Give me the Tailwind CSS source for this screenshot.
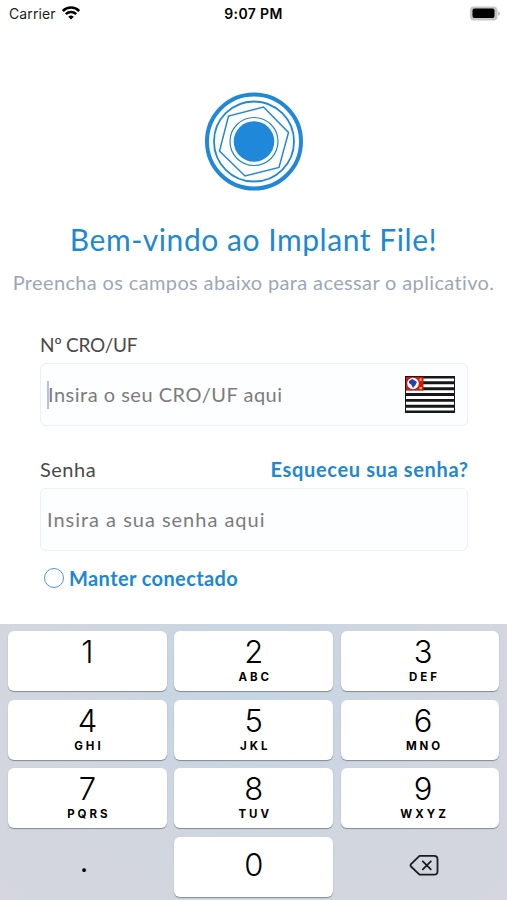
<!DOCTYPE html>
<html lang="pt-BR">
<head>
    <meta charset="UTF-8">
    <meta name="viewport" content="width=device-width, initial-scale=1">
    <title>Implant File</title>
    <script src="https://cdn.jsdelivr.net/npm/@tailwindcss/browser@4"></script>
</head>
<body class="bg-white h-[900px] flex flex-col overflow-hidden font-['Lato',sans-serif] whitespace-nowrap">

<!-- status bar -->
<header class="h-7 shrink-0 grid grid-cols-3 items-center pl-[9px] pr-[7px] pb-[2px] font-['Inter',sans-serif] text-[14px] text-[#222]">
    <div class="flex items-center gap-[6px]">
        <span class="tracking-[0.1px]">Carrier</span>
        <svg class="w-[18px] h-[14px]" viewBox="0 0 18 14" fill="none" stroke="#000" stroke-width="2.5">
            <path d="M0.8 5a11.6 11.6 0 0 1 16.4 0"/>
            <path d="M3.8 8.2a7.4 7.4 0 0 1 10.4 0"/>
            <path d="M9 13.6L6.2 10.8a4 4 0 0 1 5.6 0z" fill="#000" stroke="none"/>
        </svg>
    </div>
    <span class="text-center font-semibold text-black tracking-[0.35px] pr-[2px]">9:07 PM</span>
    <svg class="justify-self-end w-[31px] h-[15px]" viewBox="0 0 31 15">
        <rect x="1" y="0.5" width="27.5" height="14" rx="4" fill="#c4c4c4"/>
        <rect x="3.5" y="2.5" width="22" height="9.5" rx="2" fill="#000"/>
        <path d="M29.3 5.2c2 1 2 3.6 0 4.6z" fill="#aaa"/>
    </svg>
</header>

<main class="h-[596px] shrink-0 flex flex-col">
    <svg class="mt-[64px] self-center w-[100px] h-[100px]" viewBox="0 0 100 100" fill="none" stroke="#2088d8">
        <circle cx="50" cy="49.5" r="47" stroke-width="4"/>
        <circle cx="50" cy="49.5" r="40" stroke-width="1.8"/>
        <path d="M59.5 15L84.5 40.5L75 75.5L41 84L15.5 59L24.5 24Z" stroke-width="1.5"/>
        <circle cx="50" cy="49.5" r="24" stroke-width="1.2"/>
        <circle cx="50" cy="49.5" r="20.3" fill="#2088d8" stroke="none"/>
    </svg>

    <h1 class="mt-[27px] h-10 leading-10 text-center text-[30px] text-[#2088d3] tracking-[0.55px]">Bem-vindo ao Implant File!</h1>
    <p class="mt-[9px] h-7 leading-7 text-center text-[20px] text-[#9da7b7] tracking-[0.36px]">Preencha os campos abaixo para acessar o aplicativo.</p>

    <form class="mt-[33px] mx-10 flex flex-col text-[20px]">
        <label class="h-[30px] leading-[31px] text-[19px] text-[#4a4a4a] tracking-[-0.3px]">Nº CRO/UF</label>
        <div class="mt-1 h-[63px] w-[428px] rounded-md border-[1.5px] border-[#eceff1] bg-[#fcfeff] flex items-center justify-between pl-[6px] pr-3">
            <div class="flex items-center text-[#7c7c7c] tracking-[0.5px]">
                <span class="w-[2px] h-7 -mr-px bg-[#b5bff0]"></span>
                <span class="-mt-[2px]">Insira o seu CRO/UF aqui</span>
            </div>
            <!-- São Paulo flag -->
            <svg class="w-[50px] h-[37px]" viewBox="0 0 50 37">
                <rect width="50" height="37" fill="#171717"/>
                <path d="M1 3.9H49M1 9.7H49M1 15.6H49M1 21.5H49M1 27.3H49M1 33.1H49" stroke="#fff" stroke-width="2.9"/>
                <rect x="1" y="1" width="17.5" height="13.5" fill="#cf1717"/>
                <circle cx="8" cy="7.5" r="5.8" fill="#fff"/>
                <path d="M4 5l3-2 2 1 3 2-1.5 3-2.5 3-1.5-3-2.5-2z" fill="#2643a5"/>
                <path d="M14.5 2.5h2.2v2.2h-2.2zM14.5 11h2.2v2.2h-2.2z" fill="#f4cc22"/>
            </svg>
        </div>

        <div class="mt-7 h-[30px] w-[428px] leading-[30px] flex justify-between">
            <label class="text-[#4a4a4a] tracking-[0.5px]">Senha</label>
            <a class="font-bold text-[#2088d3] tracking-[0.65px] -mr-[0.65px]">Esqueceu sua senha?</a>
        </div>
        <div class="mt-1 h-[63px] w-[428px] rounded-md border-[1.5px] border-[#eceff1] bg-[#fcfeff] flex items-center pl-[6px] text-[#7c7c7c] tracking-[0.98px]">
            <span class="-mt-[2px]">Insira a sua senha aqui</span>
        </div>

        <label class="mt-3 ml-1 h-[30px] flex items-center gap-[5px] font-bold text-[#2088d3] tracking-[0.4px]">
            <span class="size-5 rounded-full border-[1.5px] border-[#4b97d8]"></span>
            <span>Manter conectado</span>
        </label>
    </form>
</main>

<!-- numeric keyboard -->
<section class="h-[276px] shrink-0 bg-[radial-gradient(ellipse_at_50%_25%,#c5d5e6_0%,#d2d6de_60%,#d5d6df_100%)] pl-2 pr-[7.5px] pt-[7px] grid grid-cols-3 auto-rows-[60px] gap-x-[7.5px] gap-y-[8.7px] font-['Inter',sans-serif] text-black text-center">
    <div class="rounded-md bg-white shadow-[0_1px_1px_#858990] pt-[3px]"><p class="text-[31px] font-[350] leading-9">1</p></div>
    <div class="rounded-md bg-white shadow-[0_1px_1px_#858990] pt-[3px]"><p class="text-[31px] font-[350] leading-9">2</p><p class="mt-px text-[11.5px] leading-3 font-bold tracking-[3px] pl-[3px]">ABC</p></div>
    <div class="rounded-md bg-white shadow-[0_1px_1px_#858990] pt-[3px] pl-[6px]"><p class="text-[31px] font-[350] leading-9">3</p><p class="mt-px text-[11.5px] leading-3 font-bold tracking-[3px] pl-[3px]">DEF</p></div>
    <div class="rounded-md bg-white shadow-[0_1px_1px_#858990] pt-[3px]"><p class="text-[31px] font-[350] leading-9">4</p><p class="mt-px text-[11.5px] leading-3 font-bold tracking-[3px] pl-[3px]">GHI</p></div>
    <div class="rounded-md bg-white shadow-[0_1px_1px_#858990] pt-[3px]"><p class="text-[31px] font-[350] leading-9">5</p><p class="mt-px text-[11.5px] leading-3 font-bold tracking-[3px] pl-[3px]">JKL</p></div>
    <div class="rounded-md bg-white shadow-[0_1px_1px_#858990] pt-[3px] pl-[6px]"><p class="text-[31px] font-[350] leading-9">6</p><p class="mt-px text-[11.5px] leading-3 font-bold tracking-[3px] pl-[3px]">MNO</p></div>
    <div class="rounded-md bg-white shadow-[0_1px_1px_#858990] pt-[3px]"><p class="text-[31px] font-[350] leading-9">7</p><p class="mt-px text-[11.5px] leading-3 font-bold tracking-[3px] pl-[3px]">PQRS</p></div>
    <div class="rounded-md bg-white shadow-[0_1px_1px_#858990] pt-[3px]"><p class="text-[31px] font-[350] leading-9">8</p><p class="mt-px text-[11.5px] leading-3 font-bold tracking-[3px] pl-[3px]">TUV</p></div>
    <div class="rounded-md bg-white shadow-[0_1px_1px_#858990] pt-[3px] pl-[6px]"><p class="text-[31px] font-[350] leading-9">9</p><p class="mt-px text-[11.5px] leading-3 font-bold tracking-[3px] pl-[3px]">WXYZ</p></div>
    <div class="pt-[7px] pr-[7px]"><p class="text-[28px] leading-9">.</p></div>
    <div class="rounded-md bg-white shadow-[0_1px_1px_#858990] pt-[10px]"><p class="text-[31px] font-[350] leading-9">0</p></div>
    <div class="flex justify-center pt-[17px] pl-[7px]">
        <svg class="w-[30px] h-[23px]" viewBox="0 0 30 23" fill="none" stroke="#1b1c20" stroke-width="1.8" stroke-linecap="round" stroke-linejoin="round">
            <path d="M10.5 1.8H25Q28.5 1.8 28.5 5.3V17.2Q28.5 20.7 25 20.7H10.5L2 12.5Q1 11.3 2 10.1Z"/>
            <path d="M13.8 7.3l8 8M21.8 7.3l-8 8"/>
        </svg>
    </div>
</section>

</body>
</html>
